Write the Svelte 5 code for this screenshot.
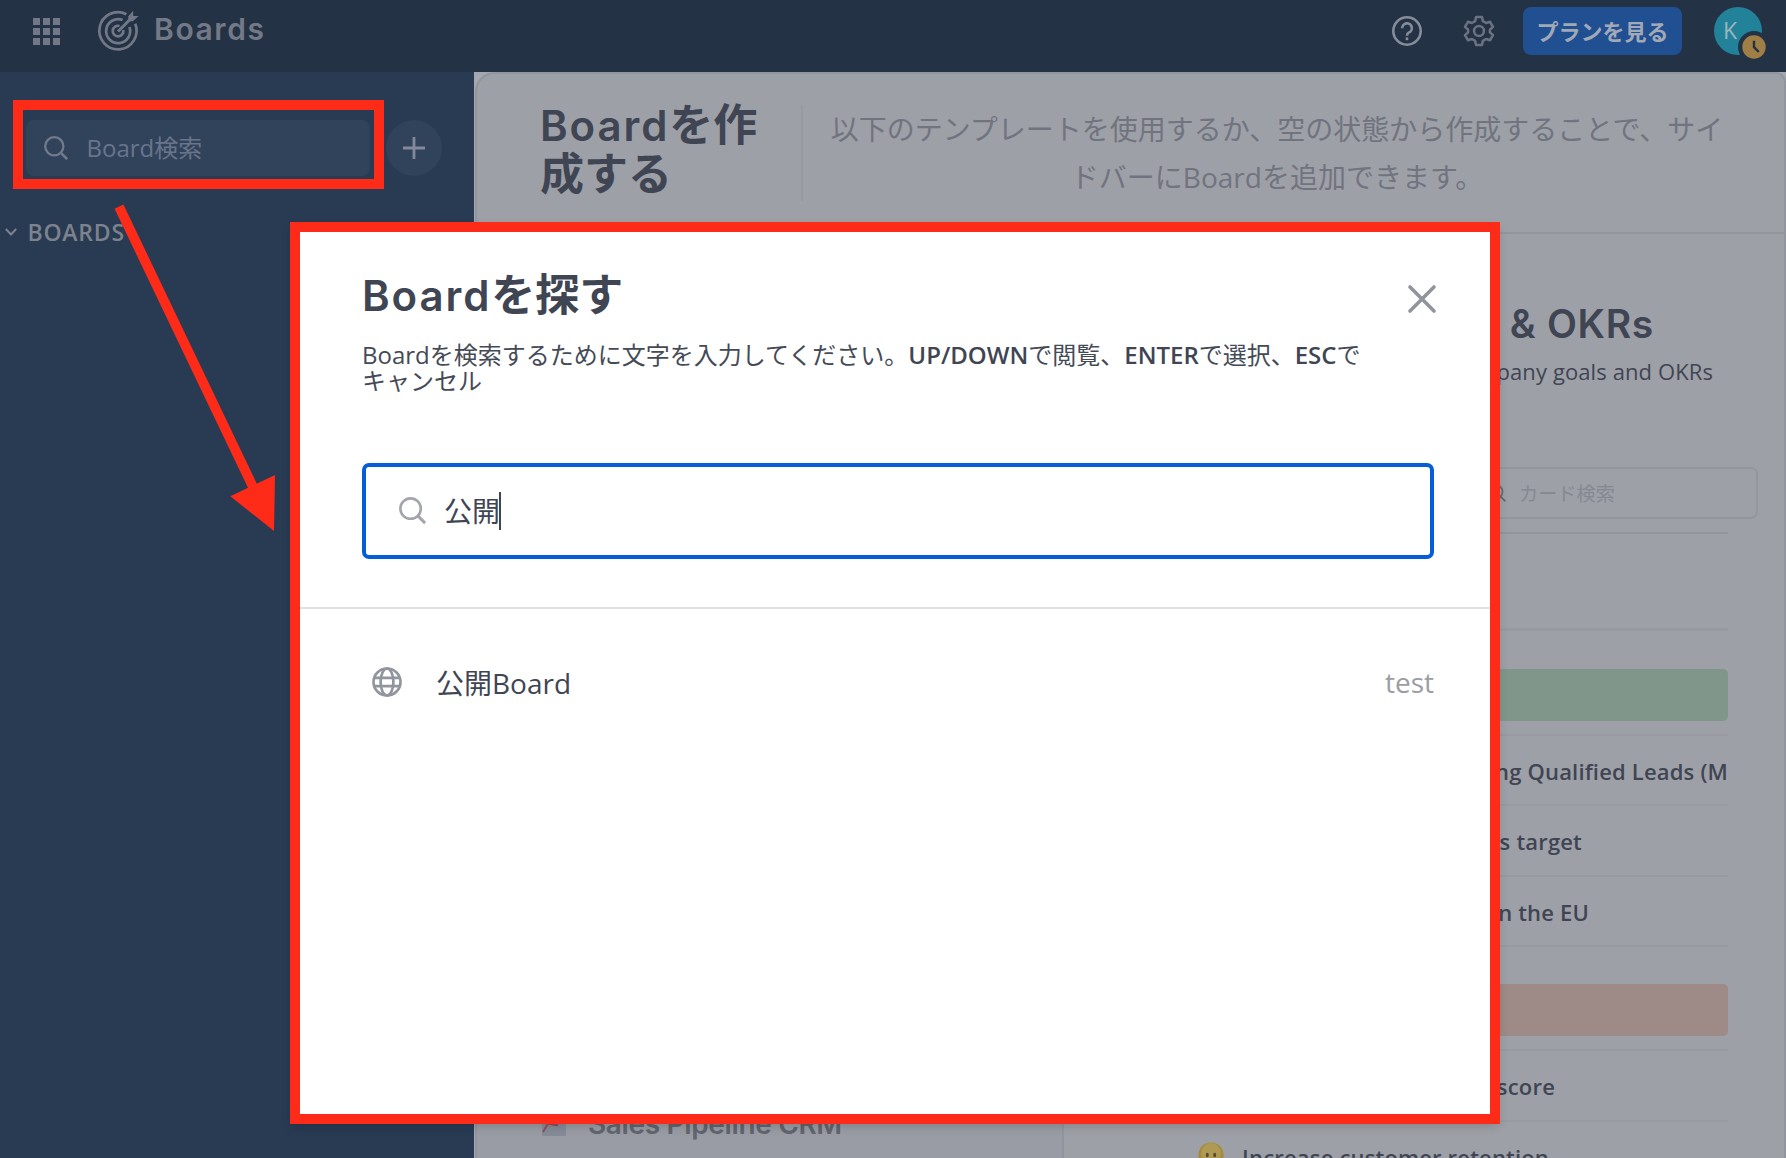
<script>
  const dots = [0, 1, 2, 3, 4, 5, 6, 7, 8];
  // `end` is the free space kept between a card title and the right edge of the list
  const goals = [
    { title: 'Marketing Qualified Leads (M', end: 0 },
    { title: 'sales target', end: 146 },
    { title: 'Open in the EU', end: 139 },
  ];
  const customers = [
    { title: 'score', end: 173 },
    { title: 'Increase customer retention', end: 179, emoji: true },
  ];
</script>

{#snippet magnifier()}
  <svg class="magnifier" viewBox="0 0 24 24" fill="none" stroke="currentColor" stroke-width="2.3">
    <circle cx="10.3" cy="10.3" r="9.1" />
    <path d="M16.8 16.8 23.2 23.2" stroke-width="2.6" />
  </svg>
{/snippet}

{#snippet card(item)}
  <li>
    {#if item.emoji}
      <svg class="emoji" viewBox="0 0 26 26">
        <circle cx="13" cy="13" r="12.6" fill="#a58a3b" />
        <circle cx="13" cy="11" r="10" fill="#ae9a52" />
        <ellipse cx="9.3" cy="13" rx="1.5" ry="2.3" fill="#5a4a30" />
        <ellipse cx="16.7" cy="13" rx="1.5" ry="2.3" fill="#5a4a30" />
        <path d="M5 19.500h16q-.5 6-8 6t-8-6z" fill="#a6a6a6" stroke="#6b5834" />
      </svg>
    {/if}
    <span style:margin-right="{item.end}px">{item.title}</span>
  </li>
{/snippet}

<div class="page">
  <header>
    <div class="grid">
      {#each dots as d (d)}<i></i>{/each}
    </div>
    <svg class="logo" viewBox="0 0 40 40" fill="none" stroke="#727885" stroke-width="2.7">
      <path d="M28.4 3.2A18.6 18.6 0 1 0 37.2 12.8" />
      <path d="M24.6 9A12 12 0 1 0 31.4 16" />
      <path d="M21.5 15A5.3 5.3 0 1 0 25.2 19" />
      <path d="M20 20.500 34 6.500" stroke-width="3" />
      <path d="M31 9V5.500L34.500 1.500V5.800H38.800L34.500 9.500H31" fill="#727885" stroke-width="1.400" />
    </svg>
    <h1>Boards</h1>
    <nav>
      <svg class="help" viewBox="0 0 32 32" fill="none" stroke="#878d98" stroke-width="2.600">
        <circle cx="16" cy="16" r="13.700" />
        <path d="M11.200 13.200A4.800 4.800 0 1 1 17.700 17.600Q16 18.500 16 20.800" />
        <path d="M16 22.400V25.200" />
      </svg>
      <svg class="gear" viewBox="0 0 24 24" fill="none" stroke="#6b7280" stroke-width="1.900" stroke-linejoin="round">
        <path d="M9.800 1.500H14.200L14.900 4.600L17.300 6L20.300 5.100L22.500 8.900L20.200 11V13L22.500 15.100L20.300 18.900L17.300 18L14.900 19.400L14.200 22.500H9.800L9.100 19.400L6.700 18L3.700 18.900L1.500 15.100L3.800 13V11L1.500 8.900L3.700 5.100L6.700 6L9.100 4.600Z" />
        <circle cx="12" cy="12" r="3.700" />
      </svg>
      <button class="plan">プランを見る</button>
      <div class="avatar">
        K
        <svg class="badge" viewBox="0 0 34 34">
          <circle cx="17" cy="17" r="16" fill="#243245" />
          <circle cx="17" cy="17" r="11.700" fill="#9f7f46" />
          <path d="M17 10.800V17.200L21.800 22" fill="none" stroke="#243245" stroke-width="2.400" />
        </svg>
      </div>
    </nav>
  </header>

  <div class="body">
    <aside>
      <div class="tools">
        <div class="find">{@render magnifier()}<span>Board検索</span></div>
        <div class="add">
          <svg viewBox="0 0 22 22" stroke="#83889a" stroke-width="2.800"><path d="M11 0V22M0 11H22" /></svg>
        </div>
      </div>
      <div class="section">
        <svg viewBox="0 0 12 8" fill="none" stroke="#7d828d" stroke-width="1.900"><path d="M.8 1 6 6.500 11.200 1" /></svg>
        <span>BOARDS</span>
      </div>
    </aside>

    <div class="backdrop">
      <main>
        <div class="intro">
          <h2><span class="latin">Board</span>を作<br />成する</h2>
          <p>以下のテンプレートを使用するか、空の状態から作成することで、サイ<br />ドバーにBoardを追加できます。</p>
        </div>
        <div class="templates">
          <div class="names">
            <svg class="chart" viewBox="0 0 24 26">
              <rect width="24" height="26" fill="#858c98" />
              <path d="M1 22 6 13.500 15 15.500 18 5" fill="none" stroke="#914c55" stroke-width="1.800" />
            </svg>
            <span>Sales Pipeline CRM</span>
          </div>
          <article>
            <h3>&amp; OKRs</h3>
            <p class="about">company goals and OKRs</p>
            <div class="cardfind">{@render magnifier()}<span>カード検索</span></div>
            <div class="lane"></div>
            <div class="bar green"></div>
            <ul>
              {#each goals as g (g.title)}{@render card(g)}{/each}
            </ul>
            <div class="bar orange"></div>
            <ul>
              {#each customers as c (c.title)}{@render card(c)}{/each}
            </ul>
          </article>
        </div>
      </main>
    </div>
  </div>

  <section class="dialog">
    <div class="top">
      <div class="titlebar">
        <h2><span class="latin">Board</span>を探す</h2>
        <svg class="close" viewBox="0 0 28 28" stroke="#91949d" stroke-width="3.600" stroke-linecap="round"><path d="M2 2 26 26M26 2 2 26" /></svg>
      </div>
      <p>Boardを検索するために文字を入力してください。<b>UP/DOWN</b>で閲覧、<b>ENTER</b>で選択、<b>ESC</b>で<br />キャンセル</p>
      <div class="query">{@render magnifier()}<span>公開</span><i class="caret"></i></div>
    </div>
    <div class="result">
      <svg class="globe" viewBox="0 0 30 30" fill="none" stroke="#92959e" stroke-width="2.700">
        <circle cx="15" cy="15" r="13.500" />
        <ellipse cx="15" cy="15" rx="6.400" ry="13.500" />
        <path d="M2.500 10.800H27.500M2.500 19.200H27.500" />
      </svg>
      <span class="name">公開Board</span>
      <span class="team">test</span>
    </div>
  </section>

  <div class="highlight"></div>
  <svg class="arrow" viewBox="0 0 176 346">
    <path d="M19 16.700 153 297" stroke="#ff2b19" stroke-width="9.800" />
    <path d="M130.300 306.300 175 285 174 341Z" fill="#ff2b19" />
  </svg>
</div>

<style>
  :global(body) { margin: 0; }
  .page {
    position: relative;
    width: 1786px;
    height: 1158px;
    overflow: hidden;
    display: flex;
    flex-direction: column;
    background: #283b53;
    font-family: 'Open Sans', 'Noto Sans CJK JP', sans-serif;
    color: #3f4553;
  }
  .page :is(h1, h2, h3, p, ul) { margin: 0; padding: 0; }
  svg { display: block; flex: none; overflow: visible; }
  h1, h2, h3, .names { font-family: Inter, 'Noto Sans CJK JP', sans-serif; }
  .magnifier { width: 24px; height: 24px; }

  header {
    flex: none;
    height: 72px;
    box-sizing: border-box;
    background: #243245;
    display: flex;
    align-items: flex-start;
    padding-left: 32.500px;
  }
  .grid {
    display: grid;
    grid-template-columns: repeat(3, 7px);
    gap: 3px;
    margin-top: 17.500px;
  }
  .grid i { height: 7px; background: #727885; }
  .logo { width: 40px; height: 40px; margin: 11px 0 0 38.500px; }
  h1 {
    margin: 14px 0 0 16px !important;
    font-size: 30px;
    line-height: 30px;
    font-weight: 600;
    letter-spacing: 1.600px;
    color: #737986;
  }
  nav { margin-left: auto; display: flex; align-items: flex-start; padding-right: 24px; }
  .help { width: 32px; height: 32px; margin-top: 15px; }
  .gear { width: 32px; height: 32px; margin: 15px 0 0 40px; }
  .plan {
    width: 159px;
    height: 48px;
    margin: 7px 32px 0 28px;
    padding: 0 0 2px;
    border: 0;
    border-radius: 8px;
    background: #204f92;
    color: #a1a9b7;
    font: 600 22px/44px 'Noto Sans CJK JP', sans-serif;
  }
  .avatar {
    position: relative;
    box-sizing: border-box;
    width: 48px;
    height: 48px;
    margin-top: 7px;
    padding-left: 9px;
    border-radius: 50%;
    background: #22829a;
    color: #9bb5bf;
    font-size: 23px;
    font-weight: 500;
    line-height: 46px;
  }
  .badge { position: absolute; left: 23px; top: 23px; width: 34px; height: 34px; }

  .body { flex: 1; display: flex; min-height: 0; }
  aside { width: 474px; flex: none; box-sizing: border-box; padding-top: 48px; }
  .tools { display: flex; gap: 16px; padding-left: 26px; }
  .find {
    display: flex;
    align-items: center;
    box-sizing: border-box;
    width: 344px;
    height: 56px;
    padding-left: 18px;
    border-radius: 8px;
    background: #31435b;
    color: #69758a;
    font-size: 24px;
    line-height: 56px;
  }
  .find .magnifier { color: #717b8c; }
  .find span { margin-left: 18.500px; }
  .add {
    width: 56px;
    height: 56px;
    border-radius: 50%;
    background: #31435b;
    display: grid;
    place-items: center;
  }
  .add svg { width: 22px; height: 22px; }
  .section {
    display: flex;
    align-items: center;
    margin-top: 41px;
    padding-left: 5px;
    font-size: 23px;
    line-height: 30px;
    font-weight: 600;
    letter-spacing: 0.800px;
    color: #7d828d;
  }
  .section svg { width: 12px; height: 8px; }
  .section span { margin-left: 10.500px; }

  .backdrop { flex: 1; background: #a5a7af; padding-left: 1px; display: flex; min-width: 0; }
  main {
    flex: 1;
    min-width: 0;
    box-sizing: border-box;
    border: 2px solid #92959e;
    border-bottom: 0;
    border-radius: 20px 10px 0 0;
    background: #9ea0a8;
    display: flex;
    flex-direction: column;
    overflow: hidden;
  }
  .intro {
    flex: none;
    box-sizing: border-box;
    height: 160px;
    border-bottom: 2px solid #92959e;
    display: flex;
    align-items: flex-start;
    padding: 27px 0 0 63px;
  }
  h2 { font-size: 44px; line-height: 48px; font-weight: 600; color: #3f4553; white-space: nowrap; }
  .latin { font-size: 42px; letter-spacing: 1.900px; }
  .intro h2 { width: 261px; flex: none; }
  .intro p {
    margin-top: 4px !important;
    border-left: 2px solid #9699a1;
    width: 948px;
    line-height: 48px;
    font-size: 28px;
    text-align: center;
    color: #71747e;
    white-space: nowrap;
  }
  .templates { flex: 1; min-height: 0; display: flex; }
  .names {
    width: 587px;
    flex: none;
    box-sizing: border-box;
    border-right: 2px solid #9295a0;
    background: #999ca4;
    display: flex;
    align-items: flex-end;
    align-self: stretch;
    padding: 0 0 18px 65px;
    font-size: 28px;
    line-height: 32px;
    font-weight: 600;
    letter-spacing: -0.350px;
    color: #61656f;
  }
  .chart { width: 24px; height: 26px; margin-bottom: 4px; }
  .names span { margin-left: 22px; white-space: nowrap; }
  article { flex: 1; min-width: 0; padding-right: 56px; text-align: right; }
  h3 {
    padding: 68px 74px 0 0 !important;
    font-size: 39px;
    line-height: 44px;
    font-weight: 600;
    letter-spacing: 0.700px;
    white-space: nowrap;
  }
  .about { padding: 10px 15px 0 0 !important; font-size: 22px; line-height: 30px; letter-spacing: 0.100px; }
  .cardfind {
    display: flex;
    align-items: center;
    box-sizing: border-box;
    width: 300px;
    height: 52px;
    margin: 81px -30px 0 auto;
    padding-left: 28px;
    border: 2px solid #93969f;
    border-radius: 7px;
    font-size: 19.200px;
    color: #858892;
  }
  .cardfind .magnifier { width: 18px; height: 18px; color: #666a75; }
  .cardfind span { margin-left: 13px; }
  .lane {
    height: 94px;
    margin: 12px 0 38px;
    border-top: 2px solid #9295a0;
    border-bottom: 3px solid #979aa2;
  }
  .lane { margin-top: 13px; }
  .bar { height: 52px; border-radius: 5px; }
  .green { background: #81968a; }
  .orange { background: #9e8a87; margin-top: 37px; }
  .bar + ul { padding-top: 13px; }
  ul { list-style: none; }
  li {
    display: flex;
    justify-content: flex-end;
    height: 68.400px;
    border-top: 2px solid #979aa2;
    font-size: 22px;
    line-height: 70px;
    font-weight: 600;
    letter-spacing: 0.180px;
    white-space: nowrap;
  }
  ul:first-of-type li:last-child { border-bottom: 2px solid #979aa2; }
  .emoji { width: 26px; height: 26px; margin: 20px 18px 0 0; }

  .dialog {
    position: absolute;
    left: 290px;
    top: 222px;
    box-sizing: border-box;
    width: 1210px;
    height: 902px;
    border: 10px solid #ff2b19;
    background: #fff;
    box-shadow: 0 4px 10px -2px rgba(0, 0, 0, 0.18);
  }
  .top {
    box-sizing: border-box;
    height: 377px;
    padding: 39px 56px 0 62px;
    border-bottom: 2px solid #e0e1e4;
  }
  .titlebar { display: flex; justify-content: space-between; }
  .close { width: 28px; height: 28px; margin: 14px -2px 0 0; }
  .top p { margin-top: 22px !important; font-size: 24px; line-height: 25.500px; white-space: nowrap; color: #454a57; }
  .top b { font-weight: 600; color: #3f4553; }
  .query {
    display: flex;
    align-items: center;
    box-sizing: border-box;
    height: 96px;
    margin-top: 70px;
    padding: 0 0 1px 33px;
    border: 4px solid #045ed8;
    border-radius: 7px;
    font-size: 28px;
    line-height: 36px;
  }
  .query .magnifier { width: 27px; height: 27px; color: #a3a5ac; }
  .query span { margin-left: 18px; }
  .caret { width: 2px; height: 38px; background: #3f4553; margin-left: -1px; }
  .result {
    display: flex;
    align-items: center;
    height: 44px;
    margin-top: 51px;
    padding: 0 56px 0 72px;
    font-size: 28px;
  }
  .globe { width: 30px; height: 30px; }
  .name { margin-left: 34px; margin-top: -1px; }
  .team { margin-left: auto; color: #9b9da4; }

  .highlight {
    position: absolute;
    left: 13px;
    top: 100px;
    width: 351px;
    height: 69px;
    border: 10px solid #ff2b19;
  }
  .arrow { position: absolute; left: 100px; top: 190px; width: 176px; height: 346px; }
</style>
